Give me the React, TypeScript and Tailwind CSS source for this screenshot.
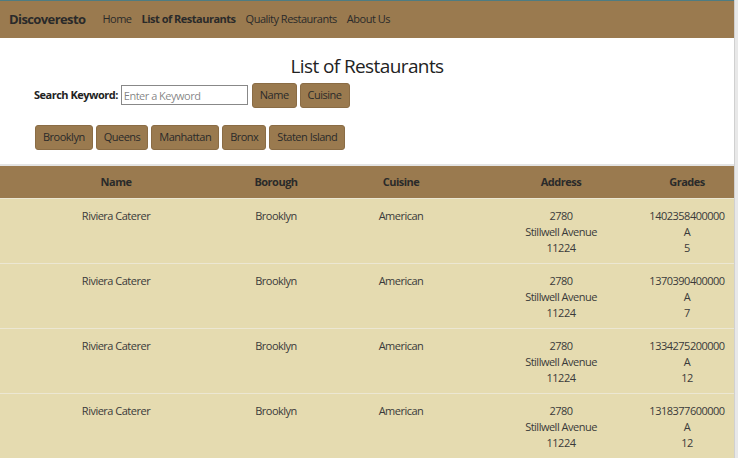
import React from 'react'

const rows = [
  { name: 'Riviera Caterer', borough: 'Brooklyn', cuisine: 'American', building: '2780', street: 'Stillwell Avenue', zip: '11224', date: '1402358400000', grade: 'A', score: '5' },
  { name: 'Riviera Caterer', borough: 'Brooklyn', cuisine: 'American', building: '2780', street: 'Stillwell Avenue', zip: '11224', date: '1370390400000', grade: 'A', score: '7' },
  { name: 'Riviera Caterer', borough: 'Brooklyn', cuisine: 'American', building: '2780', street: 'Stillwell Avenue', zip: '11224', date: '1334275200000', grade: 'A', score: '12' },
  { name: 'Riviera Caterer', borough: 'Brooklyn', cuisine: 'American', building: '2780', street: 'Stillwell Avenue', zip: '11224', date: '1318377600000', grade: 'A', score: '12' },
]

const boroughs = ['Brooklyn', 'Queens', 'Manhattan', 'Bronx', 'Staten Island']

const btn = 'h-[25px] px-[7px] rounded-[3px] bg-[#9a7a4f] border border-[#8a6c45] text-[11px] text-[#2a2a2a] tracking-[-0.5px]'
const cols = 'grid grid-cols-[232px_88px_162px_158px_94px]'

const App = () => {
  return (
    <div className="w-[738px] h-[458px] overflow-hidden flex bg-white" style={{ fontFamily: '"Open Sans", sans-serif' }}>
      <div className="w-[734px] flex flex-col border-t border-[#4e7c82]">
        <nav className="h-[37px] bg-[#9a7a4f] flex items-center pl-[9px] text-[#2a2a2a]">
          <span className="text-[13px] font-bold mr-[17px] tracking-[-0.6px]">Discoveresto</span>
          <div className="flex gap-[10px] text-[11px] tracking-[-0.5px]">
            <a>Home</a>
            <a className="font-bold">List of Restaurants</a>
            <a>Quality Restaurants</a>
            <a>About Us</a>
          </div>
        </nav>

        <div className="h-[128px] flex flex-col">
          <h1 className="text-[19px] font-medium text-[#222] text-center mt-[15px] leading-[26px] tracking-[-0.6px]">List of Restaurants</h1>
          <div className="flex items-center pl-[34px] mt-[4px] gap-[3px]">
            <span className="text-[11px] font-bold text-[#222] tracking-[-0.5px]">Search Keyword:</span>
            <input className="w-[127px] h-[20px] border border-[#888] px-[2px] text-[11px] outline-none tracking-[-0.5px]" placeholder="Enter a Keyword" />
            <button className={btn + ' ml-[1px]'}>Name</button>
            <button className={btn}>Cuisine</button>
          </div>
          <div className="flex pl-[35px] mt-[17px] gap-[3px]">
            {boroughs.map((b) => (
              <button key={b} className={btn}>{b}</button>
            ))}
          </div>
        </div>

        <div className="h-[2px] bg-[#e4e4e4]" />
        <div className={cols + ' h-[32px] items-center bg-[#9a7a4f] text-[11px] font-bold text-[#2a2a2a] text-center tracking-[-0.5px]'}>
          <div>Name</div>
          <div>Borough</div>
          <div>Cuisine</div>
          <div>Address</div>
          <div>Grades</div>
        </div>
        <div className="bg-[#e5dbb0]">
          {rows.map((r, i) => (
            <div key={i} className={cols + ' h-[65px] pt-[9px] text-[11px] leading-[16px] text-[#3a3a3a] text-center border-t border-[#ece7d3] tracking-[-0.5px]'}>
              <div>{r.name}</div>
              <div>{r.borough}</div>
              <div>{r.cuisine}</div>
              <div className="flex flex-col">
                <span>{r.building}</span>
                <span>{r.street}</span>
                <span>{r.zip}</span>
              </div>
              <div className="flex flex-col">
                <span>{r.date}</span>
                <span>{r.grade}</span>
                <span>{r.score}</span>
              </div>
            </div>
          ))}
        </div>
      </div>
      <div className="w-[4px] bg-[#e8e8e8] border-l border-[#d0d0d0]" />
    </div>
  )
}

export default App
